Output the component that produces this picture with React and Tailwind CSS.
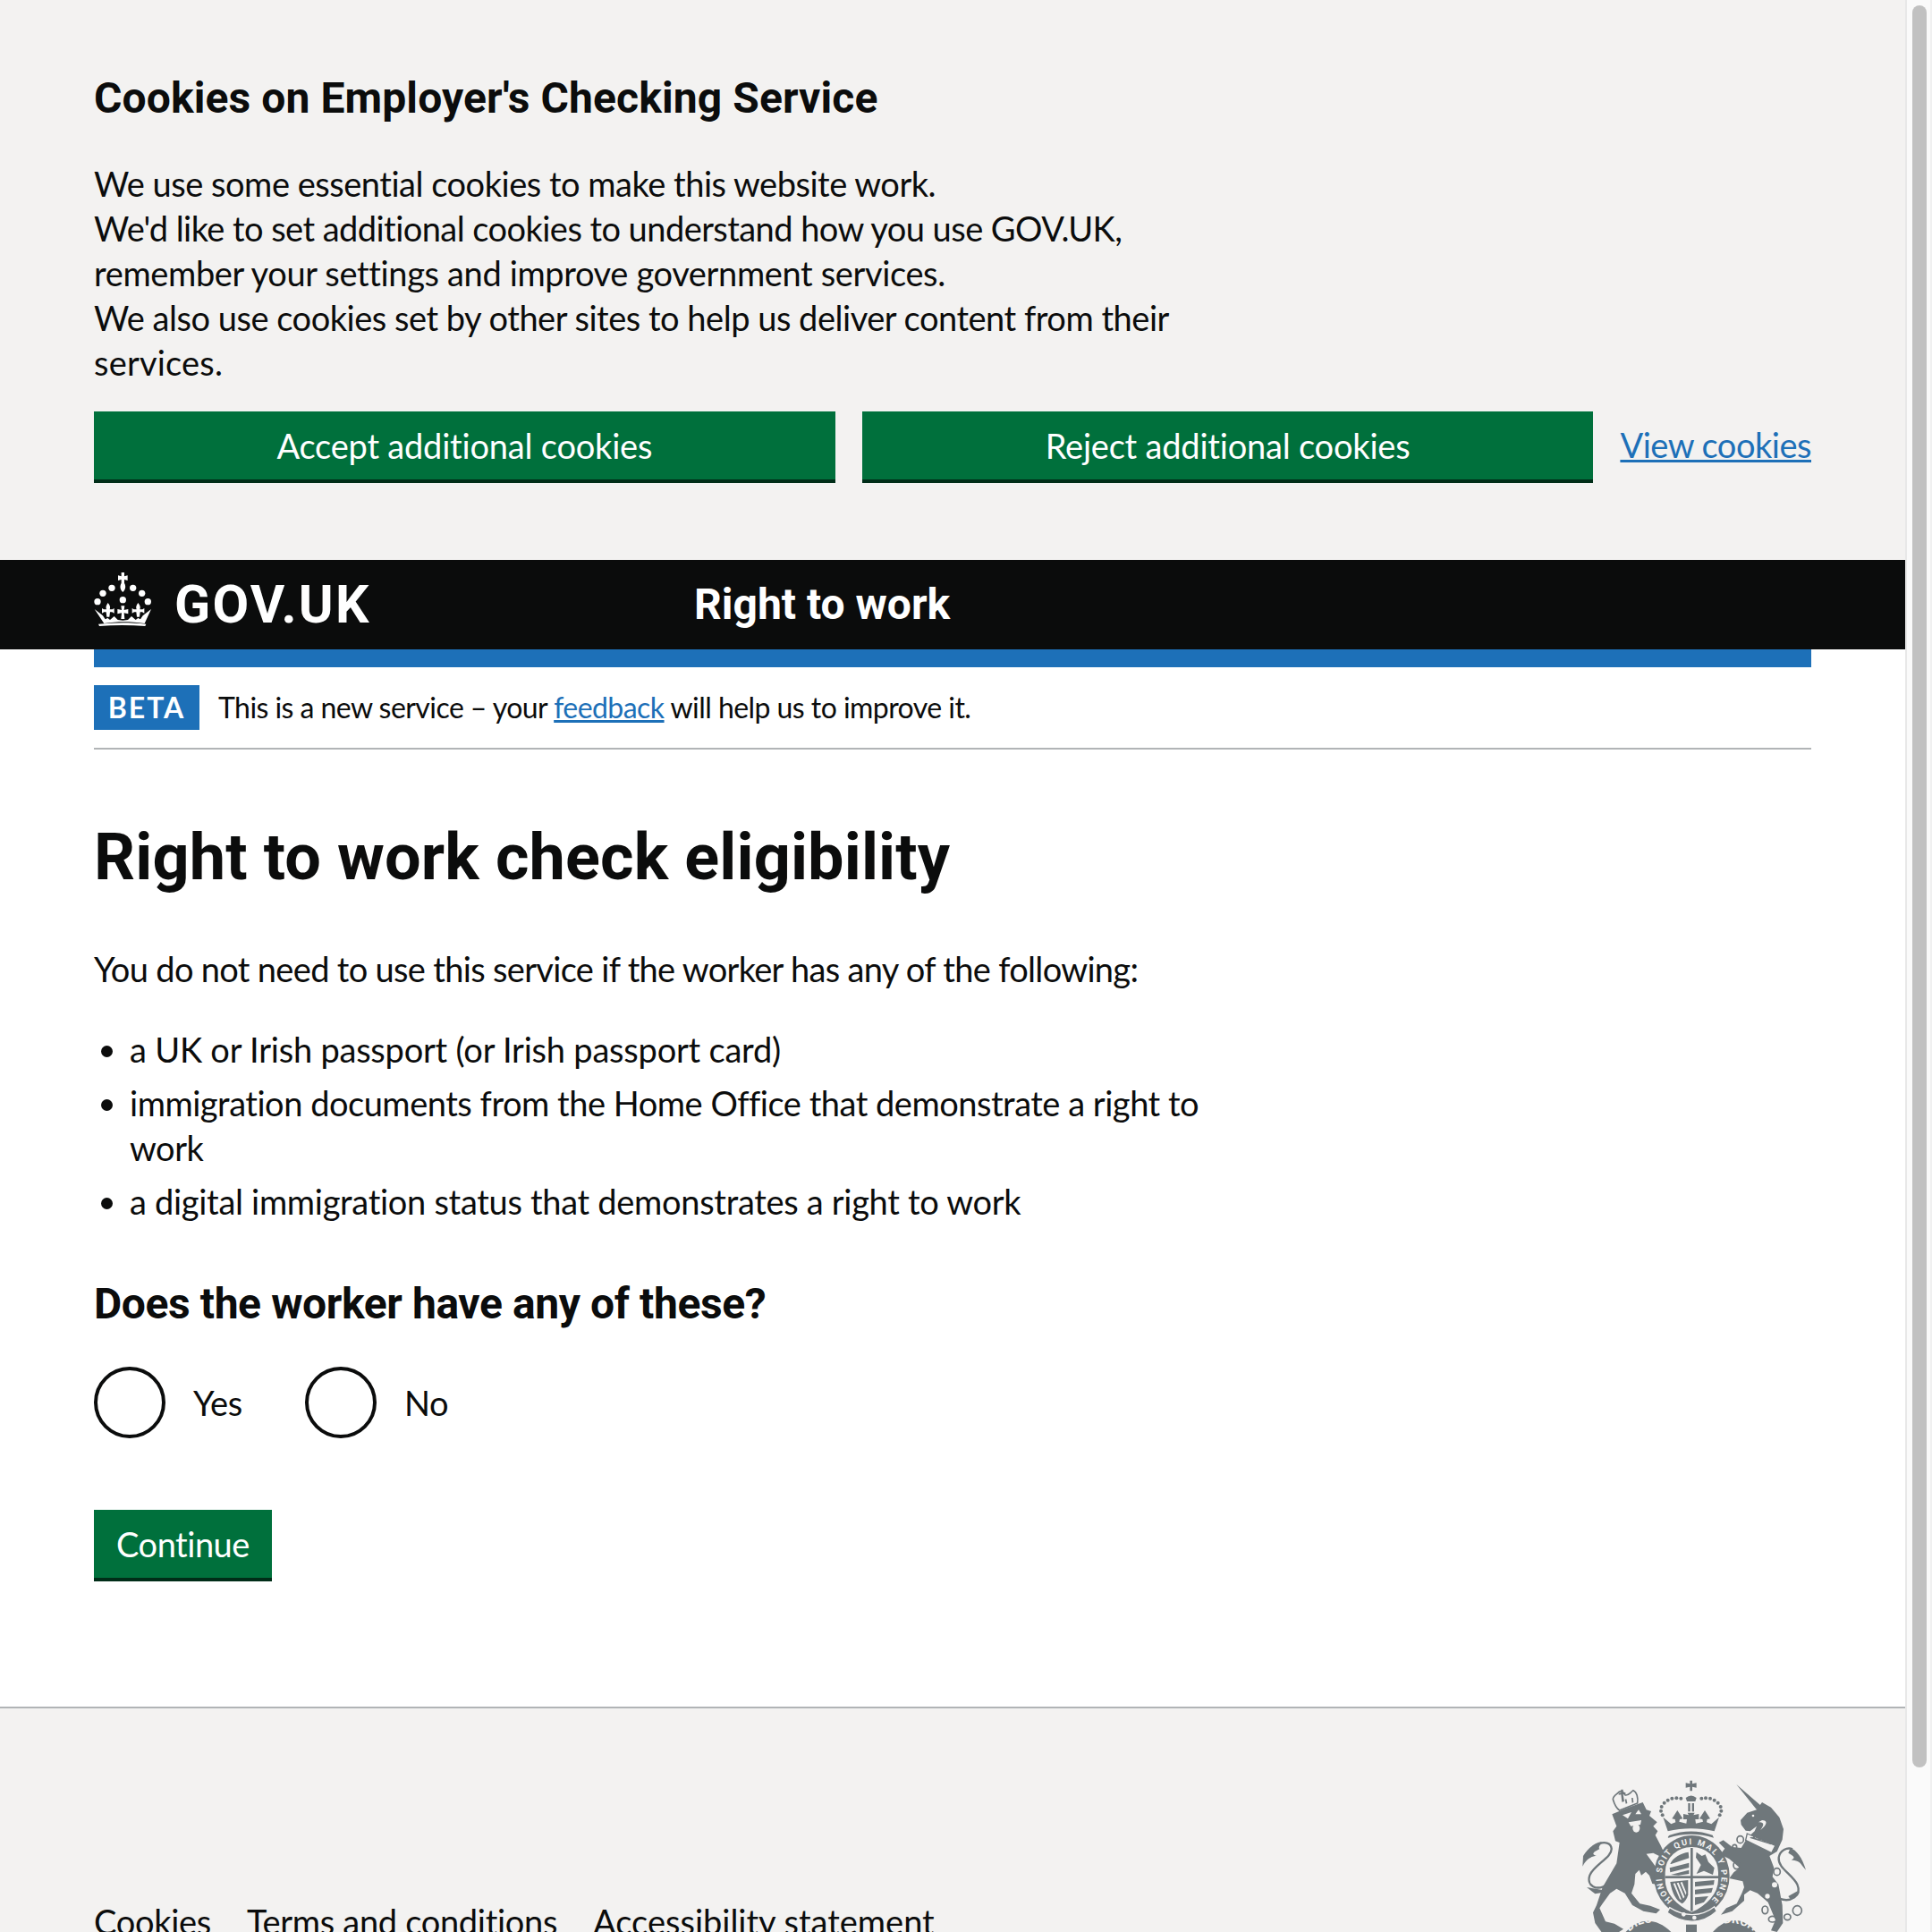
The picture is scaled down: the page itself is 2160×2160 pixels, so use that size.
import React from "react";

const BOLD = "font-['Roboto',sans-serif] font-bold";

const Crown = () => (
  <svg viewBox="135 60 192 180" className="w-16 h-[60px] shrink-0 -mt-3" fill="#fff">
    <path d="M227 60h10v13l11-3v17l-11-3v12c5 8 6 20-5 30-11-10-10-22-5-30V84l-11 3V70l11 3z" />
    <circle cx="195" cy="112" r="11" />
    <circle cx="266" cy="112" r="11" />
    <circle cx="165" cy="130" r="11" />
    <circle cx="296" cy="130" r="11" />
    <circle cx="147" cy="158" r="11" />
    <circle cx="316" cy="158" r="11" />
    <circle cx="232" cy="152" r="11" />
    <path d="M182 162c7 9 9 14 6 22h9l6-4v17l-7-4h-7l-2 16h-9l-2-16h-7l-7 4v-17l6 4h9c-3-8-1-13 5-22z" />
    <path d="M283 162c7 9 9 14 6 22h9l6-4v17l-7-4h-7l-2 16h-9l-2-16h-7l-7 4v-17l6 4h9c-3-8-1-13 5-22z" />
    <path d="M226 172h12l-2 14 14-3v16l-14-3 2 20h-12l2-20-14 3v-16l14 3z" />
    <path d="M137 183l28 22 8 12 8-4 8 6 14-12 12 12 17 2 17-2 12-12 14 12 8-6 8 4 8-12 28-22-22 48c-50-7-90-7-136 0z" />
    <path d="M150 233c54-6 108-6 160 0l-3 7c-50-4-104-4-154 0z" />
  </svg>
);

// coordinates follow the crop of the reference, only the top part is on screen
const Crest = () => (
  <svg viewBox="147 90 750 1020" className="w-[250px] h-[340px] shrink-0" fill="#6f777b">
    <defs>
      <path id="garter" d="M450 494 A100 106 0 1 1 574 497" />
      <path id="droit" d="M622 572 Q670 562 725 600" />
      <path id="dieu" d="M305 600 Q345 560 395 572" />
    </defs>

    {/* lion */}
    <g fill="none" stroke="#6f777b" strokeWidth="7">
      <path d="M232 440 C195 465 160 445 172 410 C185 375 248 350 245 320 C243 302 225 298 208 302" />
      <path d="M250 155 C255 172 262 185 272 192 L332 168 C335 150 330 130 318 125 C305 135 300 145 290 140 C285 128 275 122 265 135 C258 140 250 145 250 155z" strokeWidth="5" />
    </g>
    <path d="M277 122h7v10h8v6h-8l4 24-8 2-3-25-8 1v-6l8-1zM312 150l5 0 2 15-5 2zM290 155l5-1 3 14-5 2z" />
    <path d="M208 298 C190 300 165 320 150 345 L148 380 C160 355 178 345 195 345 C180 340 178 335 205 322 C200 318 205 305 218 300z" />
    <path d="M162 450 L210 458 L232 465 L190 472 z" />
    <path d="M247 205 L300 183 L350 165 L362 190 L378 195 L372 210 L398 232 L385 245 L400 262 L392 275 L410 310 L422 335 L405 345 L385 335 L362 338 L396 385 L420 432 L412 450 L395 440 L382 438 L372 410 L360 398 L345 410 L338 392 L325 405 L322 440 L312 470 L340 505 L375 512 L408 525 L395 538 L352 530 L315 510 L290 470 L262 455 L240 470 L215 505 L205 520 L225 565 L255 572 L285 590 L270 600 L240 640 L190 570 L183 535 L195 510 L215 450 L262 370 L272 300 L258 295 L250 262 L262 245 z" />
    <path d="M282 208 L312 198 L300 220 z M336 190 L345 205 L325 205 z" fill="#f3f2f1" />
    <ellipse cx="328" cy="252" rx="12" ry="14" fill="#f3f2f1" />
    <path d="M302 232 L345 225 L342 240 L310 245 z" fill="#f3f2f1" />

    {/* unicorn */}
    <path d="M664 105 L748 178 L732 190 z" />
    <path d="M732 190 L750 165 L780 182 L808 215 L822 255 L818 290 L800 330 L775 345 L790 385 L785 415 L805 440 L818 510 L820 570 L800 600 L780 595 L795 560 L770 500 L735 470 L710 460 L690 475 L690 495 L650 530 L612 542 L630 520 L665 505 L682 470 L690 450 L685 430 L640 420 L655 400 L675 385 L640 355 L610 340 L625 320 L605 300 L620 292 L650 315 L680 318 L700 285 L725 262 L732 245 L710 262 L695 260 L680 240 L678 225 L700 200z" />
    <path d="M700 270 L795 310 L782 335 L695 292z" fill="#f3f2f1" stroke="#6f777b" strokeWidth="4" />
    <path d="M710 282h10v-8h6v10l12 4v-8h6v11l12 4v-8h6v11l12 4v-8h6v13l-70-22z" />
    <path d="M750 225 C768 225 770 238 745 258 C762 235 752 232 738 232z" fill="#f3f2f1" />
    <circle cx="720" cy="210" r="4" fill="#f3f2f1" />
    <g fill="none" stroke="#6f777b" strokeWidth="5">
      <path d="M808 488 C845 502 885 480 868 440 C850 405 802 385 806 350 C810 325 835 315 852 322" strokeWidth="7" />
      <ellipse cx="677" cy="290" rx="11" ry="12" />
      <ellipse cx="658" cy="315" rx="7" ry="8" />
      <ellipse cx="665" cy="376" rx="11" ry="13" />
      <ellipse cx="800" cy="398" rx="11" ry="12" />
      <ellipse cx="760" cy="526" rx="10" ry="13" />
      <ellipse cx="785" cy="557" rx="13" ry="10" />
      <ellipse cx="835" cy="550" rx="11" ry="10" />
      <ellipse cx="868" cy="528" rx="15" ry="16" />
    </g>
    <circle cx="792" cy="442" r="9" fill="#f3f2f1" />
    <circle cx="768" cy="480" r="8" fill="#f3f2f1" />
    <path d="M845 318 C865 325 885 350 897 392 L885 378 C875 362 865 362 848 358 C860 352 862 348 838 335z" />
    <path d="M838 480 L870 462 L862 482 L845 490z" />

    {/* royal crown */}
    <path d="M508 92h8v11l14-3v16l-14-3v14h-8v-14l-14 3v-16l14 3z" />
    <path d="M494 150 Q512 135 530 150 L526 162 L498 162z" />
    <rect x="502" y="168" width="7" height="28" />
    <rect x="515" y="168" width="7" height="28" />
    {[[478, 152], [463, 151], [448, 152], [434, 158], [422, 167], [413, 180], [411, 194], [416, 208], [547, 152], [561, 151], [576, 152], [590, 158], [602, 167], [611, 180], [613, 194], [608, 208]].map(([cx, cy]) => (
      <circle key={`${cx}-${cy}`} cx={cx} cy={cy} r="6" />
    ))}
    <path d="M418 215 L445 238 L460 232 L458 222 L448 220 L466 192 L484 220 L474 222 L472 230 L496 236 L498 222 L486 222 L486 204 L504 208 L500 200 L524 200 L520 208 L538 204 L538 222 L526 222 L528 236 L552 230 L550 222 L540 220 L558 192 L576 220 L566 222 L564 232 L580 238 L606 215 L590 262 C540 250 484 250 434 262z" />
    <path d="M440 275 C486 258 538 258 584 275 L588 284 C540 268 484 268 436 284 C432 282 436 278 440 275z" />

    {/* garter and shield */}
    <ellipse cx="514" cy="412" rx="127" ry="136" />
    <path d="M428 400 C428 350 470 318 514 318 C560 318 600 350 600 400 V425 C600 470 560 510 514 530 C468 510 428 470 428 425z" fill="#f3f2f1" stroke="#f3f2f1" strokeWidth="6" />
    <rect x="510" y="318" width="8" height="212" />
    <rect x="425" y="412" width="178" height="8" />
    <path d="M442 372 C450 350 480 335 503 332 L505 352 L445 372z M440 385 L505 368 L505 384 L442 400z M444 408 L505 392 L505 405 L470 410z" />
    <path d="M530 332 L548 345 L560 340 L570 365 L590 385 L585 408 L555 395 L530 405 L545 375 L528 350z" />
    <path d="M525 432 L590 426 L588 442 L525 448z M525 458 L585 452 L580 468 L525 474z M525 484 L570 480 L555 500 L525 510z" />
    <path d="M442 432 L502 426 L502 475 C498 490 490 500 482 505 C462 495 448 470 442 432z" />
    <path d="M452 438 L458 436 L480 492 L474 490z M464 436 L470 434 L490 482 L486 488z M476 434 L482 432 L496 468 L494 476z" fill="#f3f2f1" />
    <text fontFamily="Roboto,sans-serif" fontWeight="700" fontSize="28" fill="#f3f2f1" letterSpacing="2">
      <textPath href="#garter" textLength="505">HONI SOIT QUI MAL Y PENSE</textPath>
    </text>
    <path d="M440 518 C490 550 545 550 590 515 L598 530 C550 575 485 575 432 535z" stroke="#f3f2f1" strokeWidth="4" />
    <circle cx="487" cy="541" r="7" fill="#f3f2f1" />
    <circle cx="523" cy="552" r="7" fill="#f3f2f1" />

    {/* motto ribbon, the bottom is cut off by the page */}
    <path d="M285 610 C320 560 385 540 445 600 V700 H285z" />
    <path d="M585 600 C640 540 700 555 735 610 V700 H585z" />
    <path d="M495 575h36v50h-36z" />
    <text fontFamily="Roboto,sans-serif" fontWeight="700" fontSize="40" fill="#f3f2f1">
      <textPath href="#dieu">DIEU</textPath>
    </text>
    <text fontFamily="Roboto,sans-serif" fontWeight="700" fontSize="40" fill="#f3f2f1">
      <textPath href="#droit">DROIT</textPath>
    </text>
  </svg>
);

const Radio = ({ label }) => (
  <label className="flex items-center gap-[31px]">
    <span className="w-20 h-20 rounded-full border-4 border-[#0b0c0c] bg-white" />
    <span className="w-[60px]">{label}</span>
  </label>
);

const CookieButton = ({ className, children }) => (
  <button className={`h-20 bg-[#00703c] text-white border-b-4 border-[#002d18] text-center ${className}`}>
    {children}
  </button>
);

const App = () => {
  return (
    <div className="flex h-[2160px] overflow-hidden bg-white text-[#0b0c0c] text-[38px] leading-[50px] tracking-[-0.48px] font-['Lato',sans-serif]">
      <div className="w-[2130px] shrink-0">
        {/* cookie banner */}
        <section className="bg-[#f3f2f1] px-[105px] pt-20 pb-[86px]">
          <h2 className={`text-[48px] leading-[60px] tracking-[0.1px] ${BOLD}`}>Cookies on Employer's Checking Service</h2>
          <p className="mt-10">
            We use some essential cookies to make this website work.
            <br />
            <span className="tracking-[-0.55px]">We'd like to set additional cookies to understand how you use GOV.UK,</span>
            <br />
            <span className="tracking-[-0.36px]">remember your settings and improve government services.</span>
            <br />
            We also use cookies set by other sites to help us deliver content from their
            <br />
            <span className="tracking-[0.2px]">services.</span>
          </p>
          <div className="mt-[30px] flex items-center gap-[30px]">
            <CookieButton className="w-[829px] tracking-[-0.2px]">Accept additional cookies</CookieButton>
            <CookieButton className="w-[818px] tracking-[-0.2px]">Reject additional cookies</CookieButton>
            <a className="mb-1.5 text-[#1d70b8] underline whitespace-nowrap">View cookies</a>
          </div>
        </section>

        {/* header */}
        <header className="h-[100px] bg-[#0b0c0c] text-white pl-[105px] flex items-center">
          <Crown />
          <span className={`ml-[26px] w-[581px] text-[59px] tracking-[2.3px] ${BOLD}`}>GOV.UK</span>
          <span className={`text-[48px] tracking-normal ${BOLD}`}>Right to work</span>
        </header>

        <main className="mx-[105px]">
          <div className="h-5 bg-[#1d70b8]" />
          <div className="py-5 border-b-2 border-[#b1b4b6] flex items-center text-[32px]">
            <strong className="w-[118px] h-[50px] bg-[#1d70b8] text-white font-bold tracking-[2px] flex items-center justify-center">BETA</strong>
            <span className="ml-[21px] tracking-[-0.55px]">
              This is a new service – your <a className="text-[#1d70b8] underline">feedback</a> will help us to improve it.
            </span>
          </div>

          <h1 className={`mt-20 pt-px text-[72px] leading-[80px] tracking-[0.13px] ${BOLD}`}>Right to work check eligibility</h1>
          <p className="mt-[59px] tracking-[-0.68px]">You do not need to use this service if the worker has any of the following:</p>
          <ul className="mt-[40px] pl-10 list-disc space-y-2.5 max-w-[1280px]">
            <li className="tracking-[-0.22px]">a UK or Irish passport (or Irish passport card)</li>
            <li>
              immigration documents from the Home Office that demonstrate a right to
              <br />
              work
            </li>
            <li className="tracking-[-0.3px]">a digital immigration status that demonstrates a right to work</li>
          </ul>
          <h2 className={`mt-[60px] text-[48px] leading-[60px] tracking-[-0.4px] ${BOLD}`}>Does the worker have any of these?</h2>
          <div className="mt-10 flex gap-[65px]">
            <Radio label="Yes" />
            <Radio label="No" />
          </div>
          <button className="mt-20 w-[199px] h-20 bg-[#00703c] text-white border-b-4 border-[#002d18]">Continue</button>
        </main>

        {/* footer */}
        <footer className="mt-[140px] border-t-2 border-[#b1b4b6] bg-[#f3f2f1] pl-[105px] pr-[111px] pt-20 flex justify-between">
          <ul className="mt-[133px] flex gap-10">
            <li className="tracking-[-0.3px]">Cookies</li>
            <li className="tracking-[-0.3px]">Terms and conditions</li>
            <li className="tracking-normal">Accessibility statement</li>
          </ul>
          <Crest />
        </footer>
      </div>

      {/* scrollbar */}
      <div className="w-[30px] shrink-0 bg-[#fafafa] border-l-2 border-r-2 border-l-[#e8e8e8] border-r-[#f0f0f0] pl-1.5 pt-1.5">
        <div className="w-4 h-[1970px] rounded-full bg-[#c1c1c1]" />
      </div>
    </div>
  );
};

export default App;
